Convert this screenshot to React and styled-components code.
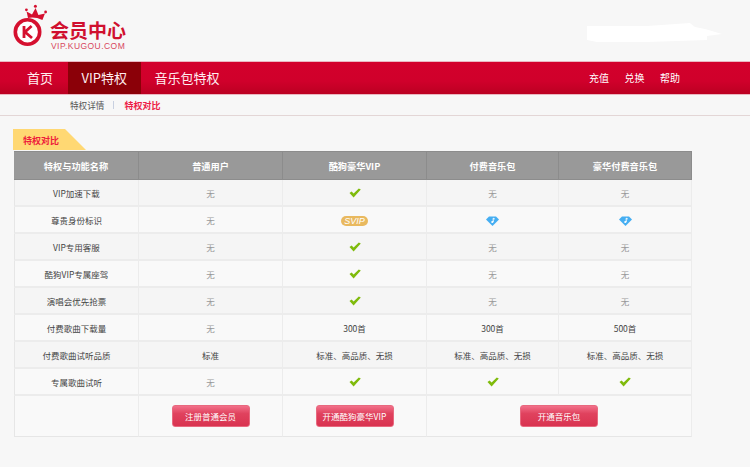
import React from 'react';
import styled, { createGlobalStyle } from 'styled-components';

const GlobalStyle = createGlobalStyle`
  html, body {
    margin: 0;
    padding: 0;
    background: #f7f7f7;
    font-family: "Noto Sans CJK SC", "Liberation Sans", sans-serif;
  }
`;

const Page = styled.div`
  width: 750px;
  height: 467px;
  overflow: hidden;
`;

const Header = styled.header`
  height: 61px;
  display: flex;
  align-items: flex-start;
  justify-content: space-between;
`;

const Brand = styled.div`
  display: flex;
  align-items: flex-start;
  padding: 4px 0 0 13px;
`;

const BrandText = styled.div`
  display: flex;
  flex-direction: column;
  margin: 16px 0 0 1px;
`;

const BrandTitle = styled.div`
  font-size: 19px;
  line-height: 20px;
  font-weight: 700;
  color: #d0102f;
  white-space: nowrap;
`;

const BrandUrl = styled.div`
  font-family: "Liberation Sans", sans-serif;
  font-size: 8.5px;
  line-height: 11px;
  margin: 1px 0 0 1px;
  letter-spacing: 0.45px;
  color: #d8485e;
  white-space: nowrap;
`;

const Smudge = styled.svg`
  margin: 23px 27px 0 0;
`;

const NavBar = styled.nav`
  height: 32px;
  border-top: 1px solid #ebb8c2;
  border-bottom: 1px solid #eab6c0;
  background: linear-gradient(#d3002c 0, #d0002b 60%, #bb0022 100%);
  display: flex;
  justify-content: space-between;
  align-items: stretch;
`;

const NavLeft = styled.div`
  display: flex;
  padding-left: 13px;
`;

const NavItem = styled.a`
  display: flex;
  align-items: center;
  padding: 0 14px 2px;
  font-size: 13px;
  color: #ffeef0;
`;

const ActiveNavItem = styled(NavItem)`
  margin-left: 1px;
  padding: 0 13.5px 2px;
  background: #8b0008;
`;

const NavRight = styled.div`
  display: flex;
  align-items: center;
  gap: 15.5px;
  padding: 0 70px 2px 0;
`;

const NavLink = styled.a`
  font-size: 10px;
  color: #fff;
`;

const SubNav = styled.div`
  height: 20px;
  border-bottom: 1px solid #e3d6d6;
  display: flex;
  align-items: center;
  padding-left: 70px;
  font-size: 8.6px;
  color: #555;
`;

const SubSep = styled.span`
  width: 1px;
  height: 8px;
  background: #c8d0e0;
  margin: 0 10px 0 9px;
`;

const SubActive = styled.span`
  font-size: 9px;
  color: #ee1c46;
  font-weight: 700;
`;

const Content = styled.main`
  padding: 13px 0 0 13px;
`;

const Tag = styled.div`
  width: 73px;
  height: 21px;
  background: #ffd873;
  clip-path: polygon(0 0, 52px 0, 100% 100%, 0 100%);
  box-sizing: border-box;
  padding-left: 10px;
  font-size: 9px;
  line-height: 23px;
  font-weight: 700;
  color: #ee1c3c;
`;

const Table = styled.table`
  margin: 1px 0 0 1px;
  width: 678px;
  table-layout: fixed;
  border-collapse: separate;
  border-spacing: 0;
  font-size: 8.5px;
  color: #444;
  text-align: center;
`;

const Column = styled.col`
  width: ${(p) => p.$w}px;
`;

const HeadCell = styled.th`
  box-sizing: border-box;
  height: 29px;
  padding: 0;
  background: #999;
  color: #fff;
  font-size: 9.2px;
  font-weight: 700;
  border-right: 1px solid #8c8c8c;
  border-top: 1px solid #8c8c8c;
  border-bottom: 1px solid #8c8c8c;
`;

const Row = styled.tr`
  height: 27px;
  background: ${(p) => (p.$odd ? '#f5f5f5' : '#f9f9f9')};
`;

const Cell = styled.td`
  box-sizing: border-box;
  padding: 0;
  border-right: 1px solid #ececec;
  border-bottom: 2px solid #ececec;

  &:first-child {
    border-left: 1px solid #e6e6e6;
  }
`;

const None = styled.span`
  color: #999;
`;

const SvipBadge = styled.span`
  display: block;
  width: 27px;
  height: 10px;
  margin: 3px auto 0;
  border-radius: 5px;
  background: #e9b95f;
  color: #fff;
  font-family: "Liberation Sans", sans-serif;
  font-size: 9px;
  line-height: 10px;
  font-style: italic;
`;

const ActionRow = styled.tr`
  height: 41px;
  background: #f9f9f9;
`;

const ActionCell = styled.td`
  box-sizing: border-box;
  padding: 0;
  border-right: 1px solid #ececec;
  border-bottom: 1px solid #e6e6e6;

  &:first-child {
    border-left: 1px solid #e6e6e6;
  }
`;

const ActionButton = styled.button`
  display: block;
  width: 78px;
  height: 22px;
  margin: 0 auto;
  padding: 0;
  border: 1px solid #e8697f;
  border-radius: 3px;
  background: linear-gradient(#f2708a 0, #e0425e 38%, #d93350 100%);
  color: #fff;
  font-family: inherit;
  font-size: 8.5px;
`;

const IconSvg = styled.svg`
  display: block;
  margin: ${(p) => p.$top || 0}px auto 0;
`;

const Check = () => (
  <IconSvg width="12" height="10" viewBox="0 0 12 10">
    <path d="M0.5 5 L2.6 3.4 L4.6 5.4 L9.8 0.4 L11.8 1.6 L4.6 9.6 Z" fill="#7fbb0c" />
  </IconSvg>
);

const Diamond = () => (
  <IconSvg width="13" height="10" viewBox="0 0 13 10" $top={3}>
    <path d="M3 0.5 H10 L13 3.5 L6.5 10 L0 3.5 Z" fill="#45aef2" />
    <path d="M7.2 2.2 V6 M7.2 2.2 L8.8 3" stroke="#fff" strokeWidth="1" fill="none" />
    <circle cx="6.3" cy="6" r="1.1" fill="#fff" />
  </IconSvg>
);

const Crest = () => (
  <svg width="36" height="44" viewBox="0 0 36 44">
    <circle cx="14.5" cy="28" r="12.2" fill="#fff" stroke="#d5102f" strokeWidth="3.6" />
    <path d="M11 22 V34 M18.6 22 L12 28 L19 34" stroke="#d5102f" strokeWidth="2.8" fill="none" />
    <path d="M15 14 L13.6 7.4 L19 10.4 L22.6 4 L25.4 11 L32 9.4 L29.4 16 Q22 12.6 15 14 Z" fill="#d5102f" />
    <circle cx="13.4" cy="5.8" r="1.4" fill="#d5102f" />
    <circle cx="22.4" cy="2.2" r="1.5" fill="#d5102f" />
    <circle cx="32.6" cy="8" r="1.4" fill="#d5102f" />
  </svg>
);

const none = <None>无</None>;
const check = <Check />;
const gem = <Diamond />;
const tiers = '标准、高品质、无损';

const rows = [
  ['VIP加速下载', none, check, none, none],
  ['尊贵身份标识', none, <SvipBadge>SVIP</SvipBadge>, gem, gem],
  ['VIP专用客服', none, check, none, none],
  ['酷狗VIP专属座驾', none, check, none, none],
  ['演唱会优先抢票', none, check, none, none],
  ['付费歌曲下载量', none, '300首', '300首', '500首'],
  ['付费歌曲试听品质', '标准', tiers, tiers, tiers],
  ['专属歌曲试听', none, check, check, check],
];

const widths = [125, 144, 144, 132, 133];
const heads = ['特权与功能名称', '普通用户', '酷狗豪华VIP', '付费音乐包', '豪华付费音乐包'];

export default function App() {
  return (
    <Page>
      <GlobalStyle />
      <Header>
        <Brand>
          <Crest />
          <BrandText>
            <BrandTitle>会员中心</BrandTitle>
            <BrandUrl>VIP.KUGOU.COM</BrandUrl>
          </BrandText>
        </Brand>
        <Smudge width="136" height="20" viewBox="0 0 136 20">
          <path d="M0 3 L60 3 L103 0 L108 4 L118 6 L135 11 L120 13 L120 17 L60 19 L10 19 L0 17 Z" fill="#fff" />
        </Smudge>
      </Header>
      <NavBar>
        <NavLeft>
          <NavItem>首页</NavItem>
          <ActiveNavItem>VIP特权</ActiveNavItem>
          <NavItem>音乐包特权</NavItem>
        </NavLeft>
        <NavRight>
          <NavLink>充值</NavLink>
          <NavLink>兑换</NavLink>
          <NavLink>帮助</NavLink>
        </NavRight>
      </NavBar>
      <SubNav>
        <span>特权详情</span>
        <SubSep />
        <SubActive>特权对比</SubActive>
      </SubNav>
      <Content>
        <Tag>特权对比</Tag>
        <Table>
          <colgroup>
            {widths.map((w, i) => <Column key={i} $w={w} />)}
          </colgroup>
          <thead>
            <tr>
              {heads.map((h) => <HeadCell key={h}>{h}</HeadCell>)}
            </tr>
          </thead>
          <tbody>
            {rows.map((r, i) => (
              <Row key={i} $odd={i % 2 === 0}>
                {r.map((c, j) => <Cell key={j}>{c}</Cell>)}
              </Row>
            ))}
            <ActionRow>
              <ActionCell />
              <ActionCell><ActionButton>注册普通会员</ActionButton></ActionCell>
              <ActionCell><ActionButton>开通酷狗豪华VIP</ActionButton></ActionCell>
              <ActionCell colSpan={2}><ActionButton>开通音乐包</ActionButton></ActionCell>
            </ActionRow>
          </tbody>
        </Table>
      </Content>
    </Page>
  );
}
